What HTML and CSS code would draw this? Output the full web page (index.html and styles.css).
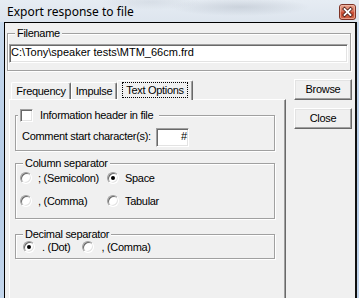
FILE: index.html
```html
<!DOCTYPE html>
<html>
<head>
<meta charset="utf-8">
<link rel="stylesheet" href="styles.css">
</head>
<body>
<div class="window">
  <div class="titlebar">
    <span class="title">Export response to file</span>
    <span class="close-btn">
      <svg width="17" height="16" viewBox="0 0 17 16">
        <defs>
          <linearGradient id="cg" x1="0" y1="0" x2="0" y2="1">
            <stop offset="0" stop-color="#e9a893"/>
            <stop offset="0.45" stop-color="#d9735c"/>
            <stop offset="0.55" stop-color="#c84a30"/>
            <stop offset="1" stop-color="#d0674a"/>
          </linearGradient>
        </defs>
        <rect x="0.5" y="0.5" width="16" height="15" rx="2.5" fill="url(#cg)" stroke="#7d3326"/>
        <rect x="1.5" y="1.5" width="14" height="13" rx="1.5" fill="none" stroke="#f3c4b6" stroke-opacity="0.6"/>
        <path d="M5.5 5 L11.5 11 M11.5 5 L5.5 11" stroke="#4a1a12" stroke-width="3.4" stroke-linecap="square"/>
        <path d="M5.5 5 L11.5 11 M11.5 5 L5.5 11" stroke="#ffffff" stroke-width="1.8" stroke-linecap="square"/>
      </svg>
    </span>
  </div>
  <div class="frame">
    <div class="client">
      <fieldset class="group file-group">
        <legend class="legend file-legend">Filename</legend>
        <div class="edit file-edit">C:\Tony\speaker tests\MTM_66cm.frd</div>
      </fieldset>
      <div class="main">
        <div class="tabs-area">
          <div class="tab-strip">
            <div class="tab tab-freq">Frequency</div>
            <div class="tab tab-imp">Impulse</div>
            <div class="tab tab-active"><span class="focus">Text Options</span></div>
          </div>
          <div class="tab-panel">
            <fieldset class="group info-group">
              <legend class="legend check-legend"><span class="checkbox"></span><span>Information header in file</span></legend>
              <div class="comment-row">
                <span class="comment-label">Comment start character(s):</span>
                <div class="edit hash-edit">#</div>
              </div>
            </fieldset>
            <fieldset class="group col-group">
              <legend class="legend">Column separator</legend>
              <div class="radio-grid">
                <div class="radio-item"><span class="radio"></span><span class="rlabel">; (Semicolon)</span></div>
                <div class="radio-item"><span class="radio checked"></span><span class="rlabel">Space</span></div>
                <div class="radio-item"><span class="radio"></span><span class="rlabel">, (Comma)</span></div>
                <div class="radio-item"><span class="radio"></span><span class="rlabel">Tabular</span></div>
              </div>
            </fieldset>
            <fieldset class="group dec-group">
              <legend class="legend">Decimal separator</legend>
              <div class="dec-row">
                <span class="radio checked"></span><span class="rlabel dot-label">. (Dot)</span>
                <span class="radio"></span><span class="rlabel">, (Comma)</span>
              </div>
            </fieldset>
          </div>
        </div>
        <div class="buttons">
          <div class="btn">Browse</div>
          <div class="btn">Close</div>
        </div>
      </div>
    </div>
  </div>
</div>
</body>
</html>
```
FILE: styles.css
```css
html, body {
  margin: 0;
  padding: 0;
}
body {
  background: #bcd2ea;
  font-family: "Liberation Sans", Arial, sans-serif;
  font-size: 11px;
  color: #000;
}
.window {
  width: 359px;
  height: 298px;
  overflow: hidden;
  display: flex;
  flex-direction: column;
  background: linear-gradient(to bottom, #cbdcef, #b4cbe6 60%, #c3d6ec);
}
.titlebar {
  height: 22px;
  flex: none;
  display: flex;
  align-items: flex-start;
  background:
    radial-gradient(ellipse 70px 9px at 240px 7px, rgba(140, 150, 165, 0.28), rgba(140, 150, 165, 0)),
    radial-gradient(ellipse 50px 8px at 150px 2px, rgba(150, 160, 175, 0.18), rgba(150, 160, 175, 0)),
    linear-gradient(to bottom, #e6ecf3, #dde5ee);
}
.title {
  font-family: "Noto Sans", "Open Sans", sans-serif;
  font-size: 12px;
  line-height: 16px;
  margin: 4px 0 0 7px;
  color: #000;
}
.close-btn {
  margin: 4px 3px 0 auto;
  width: 17px;
  height: 16px;
  display: block;
}
.close-btn svg {
  display: block;
}
.frame {
  flex: 1;
  display: flex;
}
.client {
  margin-left: 4px;
  width: 353px;
  box-sizing: border-box;
  border-left: 1px solid #000;
  border-top: 1px solid #000;
  border-right: 2px solid #101010;
  background: #f0f0f0;
  display: flex;
  flex-direction: column;
}
.group {
  margin: 0;
  padding: 0;
  min-width: 0;
  border: 1px solid #a0a0a0;
  box-shadow: 1px 1px 0 #fff, inset 1px 1px 0 #fff;
}
.legend {
  line-height: 13px;
  padding: 0 2px;
  margin-left: 7px;
  background: #f0f0f0;
  letter-spacing: -0.3px;
}
.file-group {
  margin: 4px 0 0 2px;
  width: 344px;
  box-sizing: border-box;
}
.edit {
  box-sizing: border-box;
  height: 19px;
  background: #fff;
  border: 1px solid;
  border-color: #a0a0a0 #fff #fff #a0a0a0;
  box-shadow: inset 1px 1px 0 #696969, inset -1px -1px 0 #e3e3e3;
  line-height: 15px;
  white-space: nowrap;
  overflow: hidden;
}
.file-edit {
  margin: 4px 2px 7px 1px;
  padding-left: 1px;
}
.main {
  display: flex;
  margin-top: 9px;
  align-items: flex-start;
}
.tabs-area {
  margin-left: 4px;
  width: 277px;
  flex: none;
}
.tab-strip {
  display: flex;
  align-items: flex-end;
  padding-left: 2px;
  letter-spacing: -0.3px;
}
.tab {
  box-sizing: border-box;
  height: 17px;
  border-left: 1px solid #fff;
  border-top: 1px solid #fff;
  border-right: 1px solid #696969;
  border-top-left-radius: 2px;
  border-top-right-radius: 2px;
  box-shadow: inset -1px 0 0 #a0a0a0;
  padding-top: 2px;
  line-height: 13px;
  text-align: center;
  background: #f0f0f0;
}
.tab-freq {
  width: 60px;
}
.tab-imp {
  width: 46px;
}
.tab-active {
  width: 76px;
  height: 20px;
  margin-bottom: -1px;
  padding-top: 1px;
  position: relative;
  z-index: 1;
}
.focus {
  display: inline-block;
  border: 1px dotted #000;
  padding: 1px 3px 0;
  line-height: 13px;
}
.tab-panel {
  height: 200px;
  border-top: 1px solid #fff;
  border-left: 1px solid #fff;
  border-right: 1px solid #696969;
  box-shadow: inset -1px 0 0 #a0a0a0;
  padding: 9px 0 0 5px;
  display: flex;
  flex-direction: column;
  align-items: flex-start;
}
.tab-panel .group {
  width: 260px;
  box-sizing: border-box;
}
.check-legend {
  display: flex;
  align-items: center;
  margin-left: 2px;
  padding: 0 6px 0 2px;
}
.checkbox {
  width: 13px;
  height: 13px;
  box-sizing: border-box;
  background: #fff;
  border: 1px solid;
  border-color: #a0a0a0 #fff #fff #a0a0a0;
  box-shadow: inset 1px 1px 0 #696969, inset -1px -1px 0 #e3e3e3;
  margin-right: 7px;
  flex: none;
}
.comment-row {
  display: flex;
  align-items: flex-start;
  margin: 6px 0 3px 6px;
}
.comment-label {
  width: 134px;
  padding-top: 2px;
  line-height: 13px;
  letter-spacing: -0.3px;
  white-space: nowrap;
}
.hash-edit {
  width: 33px;
  text-align: right;
  padding-right: 1px;
}
.col-group {
  margin-top: 6px;
}
.radio-grid {
  display: grid;
  grid-template-columns: 87px 87px;
  grid-auto-rows: 16px;
  row-gap: 7px;
  margin: 0 0 9px 4px;
}
.radio-item {
  display: flex;
  align-items: center;
}
.radio {
  width: 12px;
  height: 12px;
  box-sizing: border-box;
  border-radius: 50%;
  border: 1px solid;
  border-color: #a0a0a0 #fff #fff #a0a0a0;
  box-shadow: inset 1px 1px 0 #696969, inset -1px -1px 0 #e3e3e3;
  background: #fff;
  flex: none;
  display: flex;
  align-items: center;
  justify-content: center;
}
.radio.checked::after {
  content: "";
  width: 4px;
  height: 4px;
  border-radius: 50%;
  background: #000;
}
.rlabel {
  margin-left: 6px;
  line-height: 16px;
  letter-spacing: -0.3px;
  white-space: nowrap;
}
.dec-group {
  margin-top: 9px;
}
.dec-row {
  display: flex;
  align-items: center;
  height: 14px;
  margin: -1px 0 4px 7px;
}
.dec-row .rlabel {
  margin-left: 7px;
  line-height: 14px;
}
.dec-row .dot-label {
  margin-right: 12px;
}
.buttons {
  margin: -1px 0 0 8px;
  width: 58px;
  display: flex;
  flex-direction: column;
  gap: 8px;
}
.btn {
  box-sizing: border-box;
  height: 21px;
  border: 1px solid;
  border-color: #fff #696969 #696969 #fff;
  box-shadow: inset -1px -1px 0 #a0a0a0, inset 1px 1px 0 #e3e3e3;
  text-align: center;
  padding-top: 3px;
  line-height: 13px;
  letter-spacing: -0.3px;
  background: #f0f0f0;
}
```
